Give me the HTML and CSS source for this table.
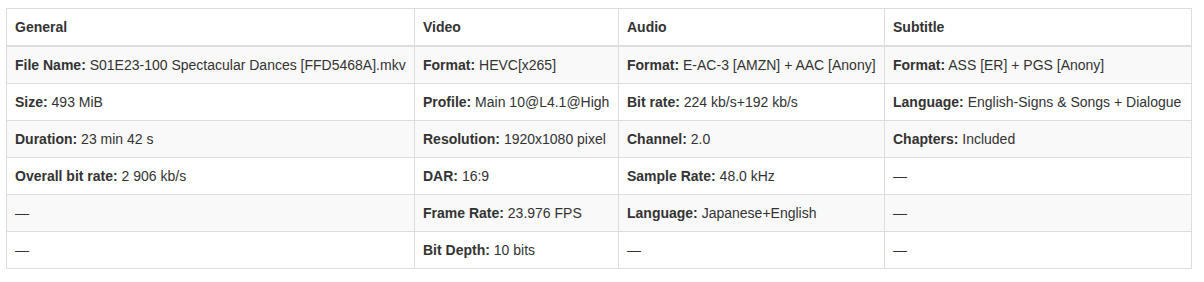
FILE: index.html
```html
<!DOCTYPE html>
<html>
<head>
<meta charset="utf-8">
<link rel="stylesheet" href="styles.css">
</head>
<body>
<table class="info-table">
  <colgroup>
    <col class="c1"><col class="c2"><col class="c3"><col class="c4">
  </colgroup>
  <thead>
    <tr><th>General</th><th>Video</th><th>Audio</th><th>Subtitle</th></tr>
  </thead>
  <tbody>
    <tr>
      <td><b>File Name:</b> S01E23-100 Spectacular Dances [FFD5468A].mkv</td>
      <td><b>Format:</b> HEVC[x265]</td>
      <td><b>Format:</b> E-AC-3 [AMZN] + AAC [Anony]</td>
      <td><b>Format:</b> ASS [ER] + PGS [Anony]</td>
    </tr>
    <tr>
      <td><b>Size:</b> 493 MiB</td>
      <td><b>Profile:</b> Main 10@L4.1@High</td>
      <td><b>Bit rate:</b> 224 kb/s+192 kb/s</td>
      <td><b>Language:</b> English-Signs &amp; Songs + Dialogue</td>
    </tr>
    <tr>
      <td><b>Duration:</b> 23 min 42 s</td>
      <td><b>Resolution:</b> 1920x1080 pixel</td>
      <td><b>Channel:</b> 2.0</td>
      <td><b>Chapters:</b> Included</td>
    </tr>
    <tr>
      <td><b>Overall bit rate:</b> 2 906 kb/s</td>
      <td><b>DAR:</b> 16:9</td>
      <td><b>Sample Rate:</b> 48.0 kHz</td>
      <td>—</td>
    </tr>
    <tr>
      <td>—</td>
      <td><b>Frame Rate:</b> 23.976 FPS</td>
      <td><b>Language:</b> Japanese+English</td>
      <td>—</td>
    </tr>
    <tr>
      <td>—</td>
      <td><b>Bit Depth:</b> 10 bits</td>
      <td>—</td>
      <td>—</td>
    </tr>
  </tbody>
</table>
</body>
</html>
```
FILE: styles.css
```css
html, body {
  margin: 0;
  padding: 0;
  background: #fff;
}
body {
  padding: 8px 0 0 6px;
  font-family: "Liberation Sans", Arial, sans-serif;
  font-size: 14px;
  color: #333;
}
.info-table {
  border-collapse: collapse;
  border-spacing: 0;
  table-layout: fixed;
  width: 1185px;
  border: 1px solid #ddd;
}
.c1 { width: 408px; }
.c2 { width: 204px; }
.c3 { width: 266px; }
.c4 { width: 307px; }
.info-table th,
.info-table td {
  border: 1px solid #ddd;
  padding: 8px;
  line-height: 20px;
  text-align: left;
  vertical-align: top;
  white-space: nowrap;
  overflow: hidden;
}
.info-table th {
  font-weight: bold;
  border-bottom: 2px solid #ddd;
}
.info-table b {
  font-weight: bold;
}
.info-table tbody tr:nth-child(odd) {
  background: #f9f9f9;
}
```
